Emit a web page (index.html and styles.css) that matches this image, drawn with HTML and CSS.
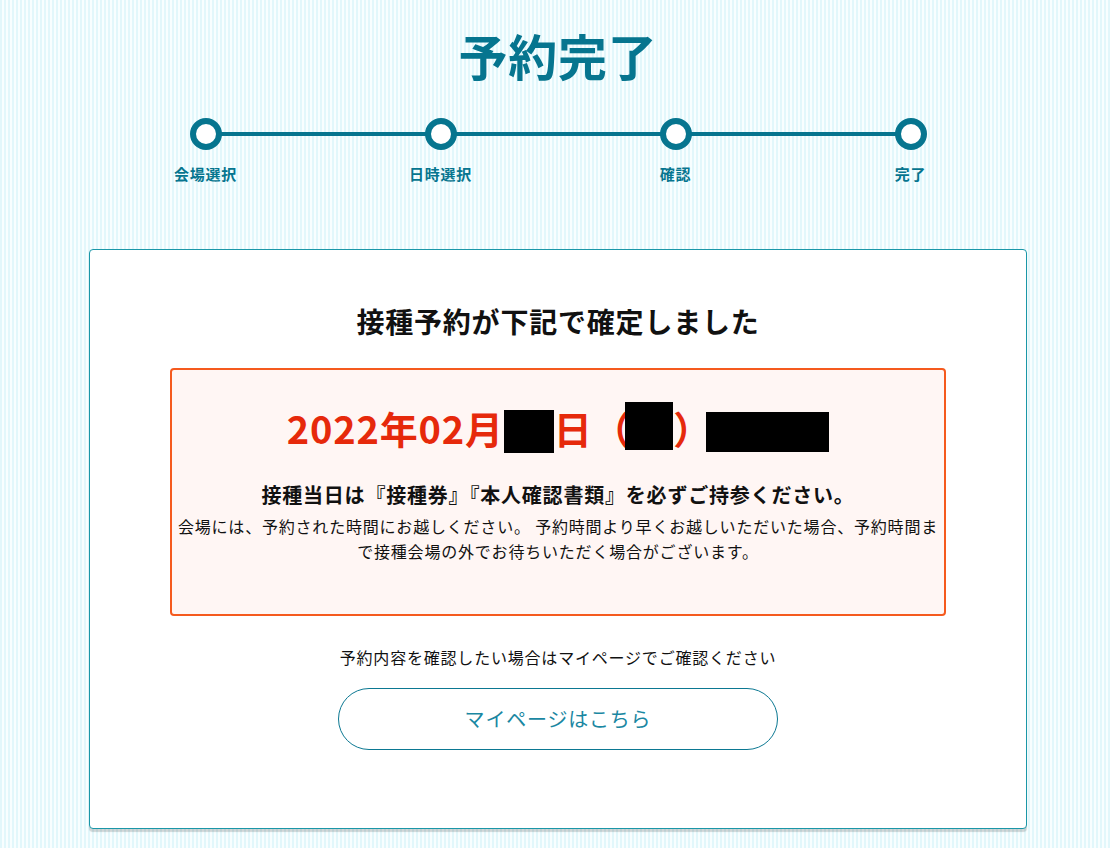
FILE: index.html
```html
<!DOCTYPE html>
<html lang="ja">
<head>
  <meta charset="UTF-8">
  <meta name="viewport" content="width=device-width, initial-scale=1.0">
  <title>予約完了</title>
  <link rel="stylesheet" href="styles.css">
</head>
<body>

  <div class="page">
    <h1 class="page-title">予約完了</h1>

    <!-- Progress steps -->
    <ol class="steps">
      <li class="step"><span class="step-dot"></span><span class="step-label">会場選択</span></li>
      <li class="step"><span class="step-dot"></span><span class="step-label">日時選択</span></li>
      <li class="step"><span class="step-dot"></span><span class="step-label">確認</span></li>
      <li class="step"><span class="step-dot"></span><span class="step-label">完了</span></li>
    </ol>

    <div class="card">
      <h2 class="card-title">接種予約が下記で確定しました</h2>

      <div class="notice">
        <p class="notice-date">2022年02月<span class="mask mask-day"></span>日（<span class="mask mask-week"></span>）<span class="mask mask-time"></span></p>
        <p class="notice-lead">接種当日は『接種券』『本人確認書類』を必ずご持参ください。</p>
        <p class="notice-text">会場には、予約された時間にお越しください。 予約時間より早くお越しいただいた場合、予約時間まで接種会場の外でお待ちいただく場合がございます。</p>
      </div>

      <p class="mypage-text">予約内容を確認したい場合はマイページでご確認ください</p>
      <a class="mypage-button" href="#">マイページはこちら</a>
    </div>
  </div>

</body>
</html>
```

FILE: styles.css
```css
/* Base */
body {
  margin: 0;
  padding-left: 6px;
  font-family: "Noto Sans CJK JP", "Noto Sans", sans-serif;
  letter-spacing: 0.05em;
  color: #111;
  background-color: #eefbfd;
  background-image: repeating-linear-gradient(90deg, #e2f7fb 0 2px, #f8feff 2px 4px);
  min-height: 848px;
}

.page {
  width: 940px;
  margin: 0 auto;
  padding-top: 23px;
}

.page-title {
  margin: 0;
  text-align: center;
  font-size: 49px;
  line-height: 64px;
  font-weight: 700;
  color: #06758f;
}

/* Steps */
.steps {
  display: grid;
  grid-template-columns: repeat(4, 1fr);
  list-style: none;
  margin: 31px 0 0;
  padding: 0;
}

.step {
  position: relative;
  display: flex;
  flex-direction: column;
  align-items: center;
}

.step:not(:last-child)::after {
  content: "";
  position: absolute;
  top: 14px;
  left: 50%;
  width: 100%;
  height: 4px;
  background-color: #06758f;
}

.step-dot {
  position: relative;
  z-index: 1;
  width: 20px;
  height: 20px;
  border: 6px solid #06758f;
  border-radius: 50%;
  background-color: #fff;
}

.step-label {
  margin-top: 13px;
  font-size: 15px;
  line-height: 22px;
  font-weight: 700;
  color: #06758f;
}

/* Card */
.card {
  margin: 64px 0 0 1px;
  width: 936px;
  padding: 52px 0 78px;
  background-color: #fff;
  border: 1px solid #1a97a8;
  border-radius: 4px;
  box-shadow: 0 3px 1px rgba(0, 0, 0, 0.16);
  text-align: center;
}

.card-title {
  margin: 0;
  font-size: 28px;
  line-height: 39px;
  font-weight: 700;
  color: #111;
}

.notice {
  margin: 27px 80px 0;
  padding: 32px 0 50px;
  background-color: #fff6f4;
  border: 2px solid #f55a1e;
  border-radius: 4px;
}

.notice p {
  margin: 0;
}

.notice-date {
  font-size: 38px;
  line-height: 50px;
  font-weight: 700;
  color: #e6290b;
}

.mask {
  display: inline-block;
  background-color: #000;
}

.mask-day {
  width: 50px;
  height: 43px;
  vertical-align: -9px;
}

.mask-week {
  width: 48px;
  height: 48px;
  margin-left: -6px;
  vertical-align: -6px;
}

.mask-time {
  width: 123px;
  height: 40px;
  margin-left: -6px;
  vertical-align: -8px;
}

.notice-lead {
  margin-top: 28px !important;
  font-size: 20px;
  line-height: 28px;
  font-weight: 700;
}

.notice-text {
  margin-top: 5px !important;
  font-size: 16px;
  line-height: 25px;
}

.mypage-text {
  margin: 29px 0 0;
  font-size: 16px;
  line-height: 25px;
}

.mypage-button {
  display: block;
  width: 438px;
  margin: 18px auto 0;
  height: 60px;
  line-height: 60px;
  border: 1px solid #0b7892;
  border-radius: 31px;
  font-size: 20px;
  color: #1a87a2;
  text-decoration: none;
}
```
